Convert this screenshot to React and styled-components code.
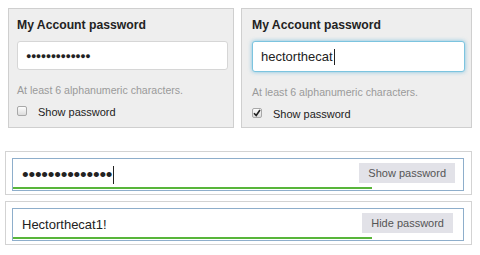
import React from 'react'
import styled, { createGlobalStyle } from 'styled-components'

const GlobalStyle = createGlobalStyle`
  html, body {
    margin: 0;
    background: #fff;
    font-family: "Liberation Sans", Arial, Helvetica, sans-serif;
  }
`

const Page = styled.div`
  width: 480px;
  height: 255px;
  padding: 8px 0 0 5px;
  box-sizing: border-box;
  overflow: hidden;
`

const TopRow = styled.div`
  display: flex;
  gap: 7px;
  padding-left: 3px;
`

const Panel = styled.div`
  width: ${(p) => p.width}px;
  height: 120px;
  box-sizing: border-box;
  background: #eeeeee;
  border: 1px solid #cfcfcf;
  padding: 8px ${(p) => p.padRight}px 0 ${(p) => p.padLeft}px;
`

const Title = styled.div`
  font-size: 12.2px;
  font-weight: bold;
  color: #222;
  line-height: 16px;
`

const Field = styled.div`
  margin-top: 8px;
  height: ${(p) => (p.focused ? 31 : 29)}px;
  box-sizing: border-box;
  background: #fff;
  border: 1px solid ${(p) => (p.focused ? '#7cc4df' : '#d6d6d6')};
  border-radius: 3px;
  box-shadow: ${(p) => (p.focused ? '0 0 4px rgba(90, 180, 220, 0.75)' : 'none')};
  display: flex;
  align-items: center;
  padding-left: 8px;
  color: #222;
  font-size: ${(p) => (p.dots ? 9 : 13)}px;
  letter-spacing: ${(p) => (p.dots ? '-0.5px' : '0')};
`

const Caret = styled.span`
  display: inline-block;
  width: 1px;
  height: ${(p) => p.h}px;
  background: #222;
  margin-left: 1px;
`

const Hint = styled.div`
  margin-top: 14px;
  font-size: 10.6px;
  color: #9a9a9a;
`

const CheckRow = styled.div`
  display: flex;
  align-items: center;
  gap: 11px;
  margin-top: 10px;
  font-size: 11px;
  color: #222;
`

const Box = styled.span`
  width: 10px;
  height: 10px;
  box-sizing: border-box;
  border: 1px solid #a8a8a8;
  border-radius: 2px;
  background: linear-gradient(#fdfdfd, #dcdcdc);
  display: flex;
  align-items: center;
  justify-content: center;
  margin-top: -2px;
`

const Stack = styled.div`
  margin-top: 23px;
  display: flex;
  flex-direction: column;
  gap: 6px;
`

const Frame = styled.div`
  width: 467px;
  box-sizing: border-box;
  border: 1px solid #d3d3d3;
  padding: 6px 7px 3px 6px;
  background: #fff;
`

const Inner = styled.div`
  position: relative;
  height: 33px;
  box-sizing: border-box;
  border: 1px solid #8eaecb;
  display: flex;
  align-items: center;
  padding: 0 8px 0 9px;
`

const Value = styled.div`
  flex: 1;
  display: flex;
  align-items: center;
  color: #222;
  font-size: ${(p) => (p.dots ? 19 : 13)}px;
  letter-spacing: ${(p) => (p.dots ? '-0.2px' : '0')};
`

const ToggleButton = styled.button`
  height: 20px;
  border: none;
  background: #e2e2e8;
  color: #555;
  font-family: inherit;
  font-size: 11px;
  padding: 0 ${(p) => p.pad}px;
  margin-right: ${(p) => p.mr}px;
  margin-top: -4px;
`

const Meter = styled.div`
  position: absolute;
  left: 0;
  bottom: 1px;
  height: 2px;
  background: #58b53a;
`

const Check = () => (
  <svg width="8" height="8" viewBox="0 0 8 8">
    <path d="M1 4.2 L3.2 6.5 L7 1" fill="none" stroke="#222" strokeWidth="1.6" />
  </svg>
)

export default function App() {
  const strength = 359
  return (
    <Page>
      <GlobalStyle />
      <TopRow>
        <Panel width={226} padLeft={8} padRight={5}>
          <Title>My Account password</Title>
          <Field dots>
            ●●●●●●●●●●●●●
          </Field>
          <Hint>At least 6 alphanumeric characters.</Hint>
          <CheckRow>
            <Box />
            Show password
          </CheckRow>
        </Panel>
        <Panel width={231} padLeft={10} padRight={6}>
          <Title>My Account password</Title>
          <Field focused>
            hectorthecat
            <Caret h={16} />
          </Field>
          <Hint>At least 6 alphanumeric characters.</Hint>
          <CheckRow>
            <Box>
              <Check />
            </Box>
            Show password
          </CheckRow>
        </Panel>
      </TopRow>
      <Stack>
        <Frame>
          <Inner>
            <Value dots>
              ••••••••••••••
              <Caret h={18} />
            </Value>
            <ToggleButton pad={9} mr={0}>Show password</ToggleButton>
            <Meter style={{ width: strength }} />
          </Inner>
        </Frame>
        <Frame>
          <Inner>
            <Value>Hectorthecat1!</Value>
            <ToggleButton pad={9} mr={2}>Hide password</ToggleButton>
            <Meter style={{ width: strength }} />
          </Inner>
        </Frame>
      </Stack>
    </Page>
  )
}
